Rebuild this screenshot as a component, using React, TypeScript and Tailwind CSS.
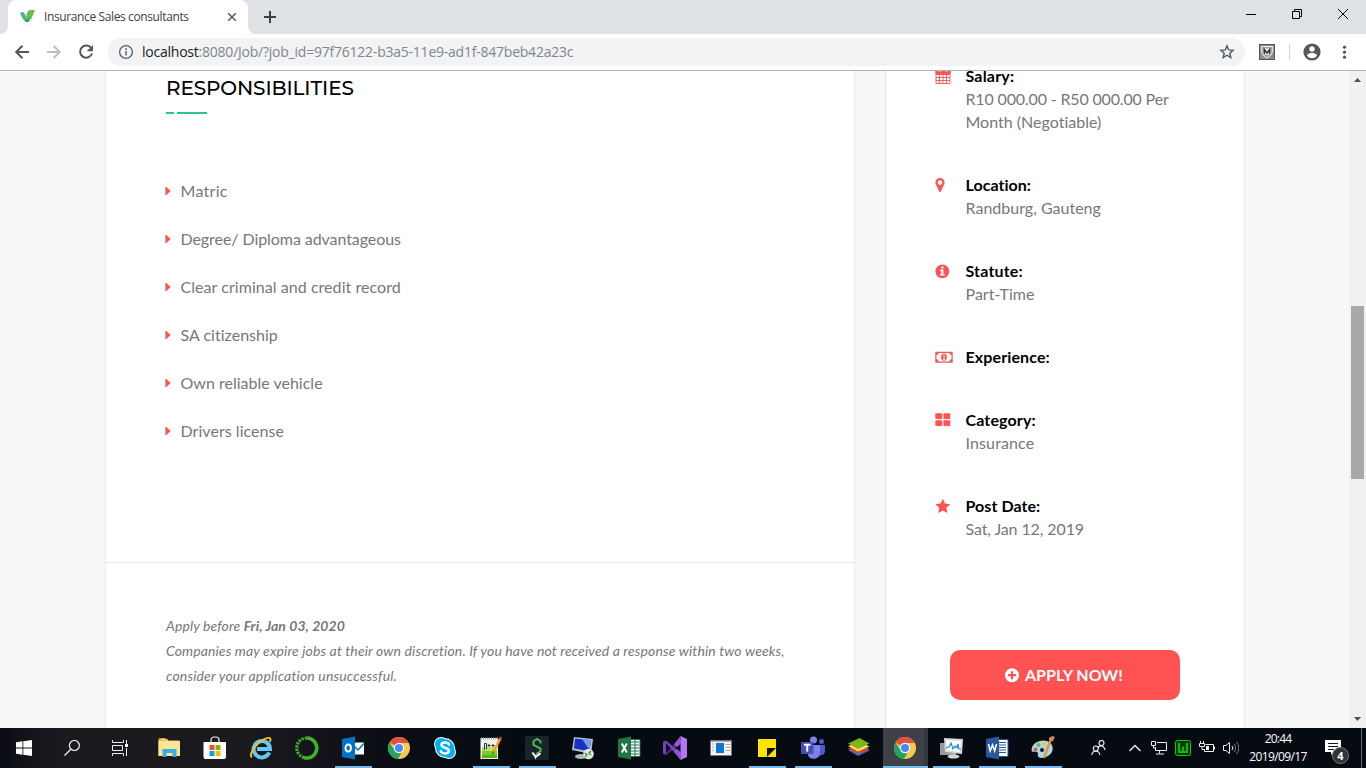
import React from "react";

const ui = "font-['Open_Sans','Noto_Sans',sans-serif]";

type IconProps = { children: React.ReactNode; box?: string; className?: string };

function Svg({ children, box = "0 0 24 24", className = "h-6 w-6" }: IconProps) {
  return (
    <svg viewBox={box} className={`block shrink-0 ${className}`} fill="none">
      {children}
    </svg>
  );
}

function TabStrip() {
  return (
    <div className="flex h-[34px] bg-[#dee1e6]">
      <div className="relative ml-2 flex h-[34px] w-[240px] items-center rounded-t-lg bg-white pl-3">
        <Svg className="absolute bottom-0 -left-2 h-2 w-2" box="0 0 8 8">
          <path d="M8 0v8H0a8 8 0 0 0 8-8Z" fill="#fff" />
        </Svg>
        <Svg className="absolute -right-2 bottom-0 h-2 w-2" box="0 0 8 8">
          <path d="M0 0v8h8a8 8 0 0 1-8-8Z" fill="#fff" />
        </Svg>
        <Svg className="h-4 w-4" box="0 0 16 16">
          <ellipse cx="8" cy="15" rx="3" ry=".6" fill="#e2eee8" />
          <path d="M0 3.500 3.600 3 5.700 6.400 6.400 13C2.900 11 1.200 8 0 3.500Z" fill="#4bb59a" />
          <path d="M5.700 13C6 8 6.500 2.500 9.500 1.100L14.800 1C13.500 5 11.500 11 8.200 13Z" fill="#69bb56" />
          <path d="m4.800 9 2 2.700 2-3.500-.6 4.800H5.700Z" fill="#159b70" />
        </Svg>
        <span className={`${ui} ml-2 w-[180px] text-[12px] leading-4 tracking-[-0.38px] whitespace-nowrap text-[#3c4043]`}>
          Insurance Sales consultants
        </span>
        <Svg className="h-4 w-4" box="0 0 16 16">
          <path d="m4.200 4.200 7.600 7.600m0-7.600-7.600 7.600" stroke="#54585d" strokeWidth="1.500" />
        </Svg>
      </div>
      <Svg className="mt-[9px] ml-[14px] h-4 w-4" box="0 0 16 16">
        <path d="M8 2v12M2 8h12" stroke="#3c4043" strokeWidth="2" />
      </Svg>
      <div className="ml-auto flex">
        <Svg className="mt-2 h-3 w-[46px]" box="0 0 46 12">
          <path d="M18 6.500h10" stroke="#000" />
        </Svg>
        <Svg className="mt-2 h-3 w-[46px]" box="0 0 46 12">
          <path d="M18.500 3.500h7v7h-7zM20.500 3V1.500h7v7H26" stroke="#000" />
        </Svg>
        <Svg className="mt-2 h-3 w-[46px]" box="0 0 46 12">
          <path d="m18 1 10 10M28 1 18 11" stroke="#000" />
        </Svg>
      </div>
    </div>
  );
}

function Toolbar() {
  return (
    <div className="flex h-[36px] items-center bg-white pl-[14px]">
      <Svg className="h-4 w-4" box="0 0 16 16">
        <path d="M15 8H2.500M8.500 1.800 2.200 8l6.300 6.200" stroke="#54585d" strokeWidth="1.900" />
      </Svg>
      <Svg className="ml-4 h-4 w-4" box="0 0 16 16">
        <path d="M1 8h12.500M7.500 1.800 13.800 8l-6.300 6.200" stroke="#bdbfc1" strokeWidth="1.900" />
      </Svg>
      <Svg className="ml-4 h-4 w-4" box="0 0 16 16">
        <path d="M13.200 4.100A6.100 6.100 0 1 0 14 9.500" stroke="#54585d" strokeWidth="2" />
        <path d="M15 1v6.300H8.700Z" fill="#54585d" />
      </Svg>
      <div className="ml-[14px] flex h-7 w-[1137px] items-center rounded-full bg-[#f1f3f4] pl-[10px]">
        <Svg className="h-4 w-4" box="0 0 16 16">
          <circle cx="8" cy="8" r="6.400" stroke="#5f6368" strokeWidth="1.400" />
          <path d="M8 7v4.500M8 4.300v1.600" stroke="#5f6368" strokeWidth="1.500" />
        </Svg>
        <span className={`${ui} ml-2 text-[14px] leading-5 tracking-[-0.23px] whitespace-nowrap text-[#80868b]`}>
          <span className="text-[#202124]">localhost</span>:8080/Job/?job_id=97f76122-b3a5-11e9-ad1f-847beb42a23c
        </span>
        <Svg className="mr-[10px] ml-auto h-4 w-4" box="0 0 16 16">
          <path d="m8 1.900 1.700 4 4.400.4-3.300 2.900 1 4.300L8 11.200l-3.800 2.300 1-4.300-3.300-2.900 4.400-.4Z" stroke="#54585d" strokeWidth="1.400" />
        </Svg>
      </div>
      <Svg className="ml-[14px] h-4 w-4" box="0 0 16 16">
        <rect x=".5" y=".5" width="15" height="15" fill="#8c8c8c" stroke="#555" />
        <path d="M2.500 2.500h11C14 9 12.500 12 8 14 3.500 12 2 9 2.500 2.500Z" fill="#a8a8a8" stroke="#ececec" />
        <path d="M4.500 4.500h7v6h-7Z" fill="#eee" />
        <path d="M5.300 10V5.500L8 9l2.700-3.500V10" stroke="#333" strokeWidth="1.500" />
      </Svg>
      <div className="ml-[14px] h-4 w-px bg-[#d0d3d7]" />
      <Svg className="ml-[13px] h-[18px] w-[18px]" box="0 0 18 18">
        <circle cx="9" cy="9" r="8.600" fill="#54585d" />
        <circle cx="9" cy="6" r="2.700" fill="#fff" />
        <path d="M3.800 12.300C5 10.500 7 10 9 10s4 .5 5.200 2.300C13 14.300 11.200 15.300 9 15.300s-4-1-5.200-3Z" fill="#fff" />
      </Svg>
      <Svg className="ml-[15px] h-4 w-4" box="0 0 16 16">
        <g fill="#54585d">
          <circle cx="8.500" cy="3.200" r="1.600" />
          <circle cx="8.500" cy="8.200" r="1.600" />
          <circle cx="8.500" cy="13.200" r="1.600" />
        </g>
      </Svg>
    </div>
  );
}

const requirements = [
  { text: "Matric", spacing: "tracking-[0.3px]" },
  { text: "Degree/ Diploma advantageous", spacing: "tracking-[-0.07px]" },
  { text: "Clear criminal and credit record", spacing: "tracking-[0.05px]" },
  { text: "SA citizenship", spacing: "tracking-[0.02px]" },
  { text: "Own reliable vehicle", spacing: "tracking-[0.01px]" },
  { text: "Drivers license", spacing: "tracking-[0.05px]" },
];

function JobDetails() {
  return (
    <main className="h-[657px] w-[750px] overflow-hidden border-x border-[#e8e8e8] bg-white">
      <section className="h-[492px] border-b border-[#e8e8e8] pl-[60px]">
        <h2 className="pt-[2px] font-['Montserrat','Inter',sans-serif] text-[20px] leading-[30px] font-medium tracking-[-0.12px] text-black">
          RESPONSIBILITIES
        </h2>
        <div className="mt-[9px] flex gap-[3px]">
          <div className="h-[2px] w-2 bg-[#2ec194]" />
          <div className="h-[2px] w-[30px] bg-[#2ec194]" />
        </div>
        <ul className="mt-[65px] flex flex-col gap-6">
          {requirements.map((item) => (
            <li key={item.text} className={`flex h-6 items-center text-[16px] leading-6 text-[#777] ${item.spacing}`}>
              <Svg className="-ml-px mr-[0.5px] h-[10px] w-[15px]" box="0 0 15 10">
                <path d="m.4.300 5.300 4.700-5.300 4.700Z" fill="#ff4f57" />
              </Svg>
              {item.text}
            </li>
          ))}
        </ul>
      </section>
      <section className="pt-[50px] pl-[60px] text-[14px] leading-[25px] whitespace-nowrap text-[#777] italic">
        <p className="tracking-[0.09px]">
          Apply before <b className="font-bold">Fri, Jan 03, 2020</b>
        </p>
        <p className="tracking-[0.12px]">
          Companies may expire jobs at their own discretion. If you have not received a response within two weeks,
        </p>
        <p className="tracking-[0.16px]">consider your application unsuccessful.</p>
      </section>
    </main>
  );
}

const red = "#ff5252";

const facts = [
  {
    label: "Salary:",
    spacing: "tracking-[0.2px]",
    lines: ["R10 000.00 - R50 000.00 Per", "Month (Negotiable)"],
    lineSpacing: "tracking-[-0.16px]",
    icon: (
      <>
        <path d="M1 3h14v12.500H1ZM1 6.500h14M1 9.500h14M1 12.500h14M4.500 6v9.500M8 6v9.500M11.500 6v9.500" stroke={red} strokeWidth=".9" />
        <path d="M.5 2.500h15V6H.5Z" fill={red} />
        <path d="M4.500 1v3M11.500 1v3" stroke="#fff" strokeWidth="2.500" />
        <path d="M4.500 1v3M11.500 1v3" stroke={red} strokeWidth="1.200" />
      </>
    ),
  },
  {
    label: "Location:",
    spacing: "tracking-[0.03px]",
    lines: ["Randburg, Gauteng"],
    lineSpacing: "tracking-[0.01px]",
    icon: <path fillRule="evenodd" d="M5 1a4.600 4.600 0 0 0-4.600 4.600c0 .8.200 1.400.5 2l3.300 6.900c.3.700 1.300.7 1.600 0l3.300-6.900c.3-.6.5-1.200.5-2A4.600 4.600 0 0 0 5 1Zm0 2.300a2.300 2.300 0 1 1 0 4.600 2.300 2.300 0 0 1 0-4.600Z" fill={red} />,
  },
  {
    label: "Statute:",
    spacing: "tracking-[0.18px]",
    lines: ["Part-Time"],
    lineSpacing: "tracking-[0.03px]",
    icon: (
      <>
        <circle cx="7.300" cy="8.300" r="6.900" fill={red} />
        <path d="M6.100 3.500h2.300v2H6.100ZM5.100 6.600h3.300V11h1.200v1.600H5.100V11h1.100V8.200H5.100Z" fill="#fff" />
      </>
    ),
  },
  {
    label: "Experience:",
    spacing: "tracking-[0.12px]",
    lines: [],
    lineSpacing: "",
    icon: (
      <>
        <path fillRule="evenodd" d="M.3 2.700h17.400v11H.3Zm3.400 1.200A2.300 2.300 0 0 1 1.500 6.100v4.200a2.300 2.300 0 0 1 2.200 2.200h10.600a2.300 2.300 0 0 1 2.200-2.200V6.100a2.300 2.300 0 0 1-2.200-2.200Z" fill={red} />
        <ellipse cx="9" cy="8.200" rx="2.900" ry="3.600" fill={red} />
        <path d="m7.900 6.700 1.300-.7v4m-1.400.2h2.600" stroke="#fff" strokeWidth=".9" />
      </>
    ),
  },
  {
    label: "Category:",
    spacing: "tracking-[0.14px]",
    lines: ["Insurance"],
    lineSpacing: "tracking-[0.13px]",
    icon: (
      <g fill={red}>
        <rect x=".3" y="1.300" width="6.900" height="5.700" rx="1" />
        <rect x="8.400" y="1.300" width="6.900" height="5.700" rx="1" />
        <rect x=".3" y="8.300" width="6.900" height="5.700" rx="1" />
        <rect x="8.400" y="8.300" width="6.900" height="5.700" rx="1" />
      </g>
    ),
  },
  {
    label: "Post Date:",
    spacing: "tracking-[0.06px]",
    lines: ["Sat, Jan 12, 2019"],
    lineSpacing: "tracking-[-0.1px]",
    icon: <path d="m7.800.8 2.200 4.700 5.200.7-3.800 3.600.9 5.100-4.500-2.500-4.500 2.500.9-5.100L.4 6.200l5.200-.7Z" fill={red} />,
  },
];

function Sidebar() {
  return (
    <aside className="ml-[30px] h-[657px] w-[360px] overflow-hidden border-x border-[#e8e8e8] bg-white pl-[49px]">
      <div className="-mt-[7px] flex flex-col gap-10">
        {facts.map((fact) => (
          <div key={fact.label} className="flex text-[16px] leading-[23px]">
            <Svg box="0 0 18 16" className="mt-1 h-4 w-[18px]">
              {fact.icon}
            </Svg>
            <div className="ml-[12.5px]">
              <div className={`font-bold text-black ${fact.spacing}`}>{fact.label}</div>
              {fact.lines.map((line) => (
                <div
                  key={line}
                  className={`whitespace-nowrap text-[#777] ${line.startsWith("Month") ? "tracking-[0.01px]" : fact.lineSpacing}`}
                >
                  {line}
                </div>
              ))}
            </div>
          </div>
        ))}
      </div>
      <button className="mt-[110px] ml-[15px] flex h-[50px] w-[230px] items-center rounded-[10px] bg-[#ff5252] pl-[54px] text-[16px] font-bold text-white">
        <Svg box="0 0 16 16" className="mr-[5px] h-4 w-4">
          <circle cx="8" cy="8.200" r="7" fill="#fff" />
          <path d="M8 4.200v8M4 8.200h8" stroke={red} strokeWidth="2.200" />
        </Svg>
        APPLY NOW!
      </button>
    </aside>
  );
}

function Scrollbar() {
  return (
    <div className="ml-auto flex h-[657px] w-[17px] flex-col items-center bg-[#f1f1f1]">
      <Svg className="h-[17px] w-[17px]" box="0 0 17 17">
        <path d="M5 11h7L8.500 7Z" fill="#505050" />
      </Svg>
      <div className="mt-[218px] h-[173px] w-[13px] bg-[#a8a8a8]" />
      <Svg className="mt-auto h-[17px] w-[17px]" box="0 0 17 17">
        <path d="M5 6h7l-3.500 4Z" fill="#505050" />
      </Svg>
    </div>
  );
}

const chrome = (
  <>
    <circle cx="12" cy="12" r="11" fill="#fbc94b" />
    <path d="M12 12 2.500 6.500A11 11 0 0 1 21.800 7H12Z" fill="#de5246" />
    <path d="M2.500 6.500A11 11 0 0 0 11 23l4.700-8.500L12 12 7.500 14Z" fill="#1da362" />
    <circle cx="12" cy="12" r="5.200" fill="#fff" />
    <circle cx="12" cy="12" r="4.100" fill="#4a8af4" />
  </>
);

const apps: { name: string; open?: boolean; active?: boolean; art: React.ReactNode }[] = [
  {
    name: "explorer",
    art: (
      <>
        <path d="M1.500 3h9l1 1.500H22V20H1.500Z" fill="#f0c65b" />
        <path d="M1.500 5H23v15H1.500Z" fill="#ffe496" />
        <path d="M2 3h7" stroke="#f7aa1d" strokeWidth="1.500" />
        <path d="M4.500 3.200h3" stroke="#fff" />
        <path d="M5.500 21v-8h14v8h-4v-4h-6v4Z" fill="#37aee3" />
      </>
    ),
  },
  {
    name: "store",
    art: (
      <>
        <path d="M8 6V4a3 3 0 0 1 3-3h2a3 3 0 0 1 3 3v2" stroke="#eee" strokeWidth="1.200" />
        <path d="M.5 6H23v15a2 2 0 0 1-2 2H2.500a2 2 0 0 1-2-2Z" fill="#fff" />
        <path d="M6.500 9h5v5h-5Z" fill="#f25022" />
        <path d="M12.500 9h5v5h-5Z" fill="#7fba00" />
        <path d="M6.500 15h5v5h-5Z" fill="#00a4ef" />
        <path d="M12.500 15h5v5h-5Z" fill="#ffb900" />
      </>
    ),
  },
  {
    name: "internet explorer",
    art: (
      <>
        <path d="M20.300 16.500A8.200 8.200 0 1 1 21 13H8" stroke="#62c9f5" strokeWidth="4" />
        <path d="M2.800 21.500C0 18 5 10.500 11 6c5-4 9.500-5 10.300-3.300.4.900.1 2-.4 3.200" stroke="#f5bf20" strokeWidth="1.900" />
      </>
    ),
  },
  {
    name: "anaconda",
    art: (
      <>
        <path d="M12 2a10 10 0 1 1-3 19.600" stroke="#43b02a" strokeWidth="3.600" />
        <path d="M9 21.600A10 10 0 0 1 12 2" stroke="#43b02a" strokeWidth="3.200" strokeDasharray="2.200 1.100" />
      </>
    ),
  },
  {
    name: "outlook",
    open: true,
    art: (
      <>
        <path d="M12 6.500h11v12H12Z" fill="#fff" />
        <path d="m12 9 5 5 6-6.500" stroke="#0072c6" strokeWidth="1.500" />
        <path d="M1 3 14 .5v23L1 21Z" fill="#0072c6" />
        <ellipse cx="7.200" cy="12" rx="2.700" ry="3.500" stroke="#fff" strokeWidth="1.900" />
      </>
    ),
  },
  { name: "chrome", art: chrome },
  {
    name: "skype",
    art: (
      <>
        <circle cx="8" cy="8" r="7" fill="#fff" />
        <circle cx="16" cy="16" r="7" fill="#fff" />
        <circle cx="12" cy="12" r="10" fill="#fff" />
        <circle cx="8" cy="8" r="6" fill="#00aff0" />
        <circle cx="16" cy="16" r="6" fill="#00aff0" />
        <circle cx="12" cy="12" r="9" fill="#00aff0" />
        <path d="M16 8.500C15 6 8.500 5.800 8.500 9c0 3.500 7.300 2 7.300 5.800 0 3.500-7 3.400-8 .2" stroke="#fff" strokeWidth="2.500" strokeLinecap="round" />
      </>
    ),
  },
  {
    name: "notepad",
    open: true,
    art: (
      <>
        <path d="M1.500 2H19v21H1.500Z" fill="#eff0ea" />
        <path d="M3 11h15v11H3Z" fill="#b5e860" />
        <path d="M3 15h15v7H3Z" fill="#7cc928" />
        <path d="M3 19h15v3H3Z" fill="#56b51b" />
        <path d="M2 2.500h17" stroke="#aaa" strokeWidth="2" strokeDasharray="1 1" />
        <path d="M5.500 14V7.500h2V13M8.500 9.500h3M10 8v3M12.500 9.500h3M14 8v3" stroke="#333" strokeWidth="1" />
        <path d="m21.500 2-7 14" stroke="#f3a22a" strokeWidth="2.600" />
        <path d="m22 1-1 2" stroke="#a63c32" strokeWidth="3" />
        <path d="m14.500 15.500-1 3" stroke="#444" />
      </>
    ),
  },
  {
    name: "recorder",
    open: true,
    art: (
      <>
        <rect width="24" height="24" rx="2" fill="#18232c" />
        <path d="M15.500 7.500V5.200L12 3 8.500 5.200v3.600l7 3.700v2.800L11 18" stroke="#55b548" strokeWidth="2" />
        <path d="M7.500 16.500c.5 1.500 2 2 3 4.500 1-2 4-1.500 4.500-4" stroke="#fff" strokeWidth="2" />
      </>
    ),
  },
  {
    name: "remote desktop",
    art: (
      <>
        <path d="m3 1 19 2-2 15L1 14Z" fill="#bcc3c8" />
        <path d="m4 2.500 16 1.700-1.500 11L3 12.500Z" fill="#1732c8" />
        <path d="m11 3 9 1-1.500 10Z" fill="#7999f2" />
        <ellipse cx="10" cy="20.500" rx="6" ry="2.500" fill="#b3b7b7" />
        <circle cx="17.500" cy="18" r="5.300" fill="#e5e6df" />
        <path d="m14 17 2 2-2 2m6-6-2 2 2 2" stroke="#388b45" strokeWidth="1.300" />
      </>
    ),
  },
  {
    name: "excel",
    art: (
      <>
        <path d="M12 3.500h11v17H12Z" fill="#fff" stroke="#217346" />
        <path d="M14 6h8M14 9h8M14 12h8M14 15h8M14 18h8M18 4v16" stroke="#217346" />
        <path d="M1 3 14 .5v23L1 21Z" fill="#217346" />
        <path d="m4.800 7.500 5 9m0-9-5 9" stroke="#fff" strokeWidth="1.900" />
      </>
    ),
  },
  {
    name: "visual studio",
    art: (
      <>
        <path d="M17.500 0v24L24 21V3Z" fill="#b179f1" />
        <path d="M0 6v12l3 1.500L18 7V0L3 17V7Z" fill="#52218a" />
        <path d="m0 6 3-1.500L18 17v7L3 7v11l-3-1Z" fill="#7a3fc0" />
        <path d="M17.500 0 11 8.500l3 2.500L18 7.500Zm0 24L11 15.500l3-2.500 4 3.500Z" fill="#9557d4" />
      </>
    ),
  },
  {
    name: "window",
    art: (
      <>
        <path d="M1.500 4.500h21v15h-21Z" fill="#f5f5f5" stroke="#777" />
        <path d="M7 7h8v10H7Z" fill="#0878d8" />
        <path d="M2 5.500h20M3 8h2M3 11h2M3 14h2M16.500 8.500h5M16.500 11.500h5M16.500 14.500h5" stroke="#aaa" />
      </>
    ),
  },
  {
    name: "notes",
    open: true,
    art: (
      <>
        <path d="M3 3h18v9l-9 9H3Z" fill="#ffe400" />
        <path d="M12 12h9v9h-9Z" fill="#111" />
        <path d="M21 12v9h-9Z" fill="#ffe400" />
      </>
    ),
  },
  {
    name: "teams",
    open: true,
    art: (
      <>
        <circle cx="12.500" cy="4" r="3.500" fill="#7b83eb" />
        <circle cx="20.500" cy="5.500" r="2.500" fill="#5059c9" />
        <path d="M17 9h7v7a5 5 0 0 1-7 3Z" fill="#5059c9" />
        <path d="M7 9h12v8c0 7-12 8-12 1Z" fill="#7b83eb" />
        <path d="M0 6h12.500v12H0Z" fill="#464eb8" />
        <path d="M3 8.700h6.500M6.250 8.500v7" stroke="#fff" strokeWidth="1.900" />
      </>
    ),
  },
  {
    name: "bluestacks",
    art: (
      <>
        <path d="m1 14 12-4 9.500 4.500L11 20Z" fill="#2878cb" />
        <path d="m1 12.500 12-4L22.500 13 11 18Z" fill="#e53c2f" />
        <path d="m1 10 12-4 9.500 4.500-11.500 5Z" fill="#ffe14b" />
        <path d="M1 7.500 12.500 2l10 5.500L11 13Z" fill="#79b51c" />
      </>
    ),
  },
  { name: "chrome window", open: true, active: true, art: chrome },
  {
    name: "monitor",
    open: true,
    art: (
      <>
        <path d="M1 7h11v12H1Z" fill="#999" />
        <path d="m5 2 19 1-1 15-17-2Z" fill="#d8dad8" />
        <path d="m7 4 15 1-1 11-13-1.500Z" fill="#f8fbff" />
        <path d="m7 12 3-1 2-4 2 6 2-3 2 2 1-4 1 5h2" stroke="#2686c0" strokeWidth="1.200" />
        <path d="M12 17h5v3h-5Z" fill="#aaa" />
        <ellipse cx="14.500" cy="20.500" rx="6" ry="2" fill="#d5d5d2" />
      </>
    ),
  },
  {
    name: "word",
    open: true,
    art: (
      <>
        <path d="M12 3.500h11v17H12Z" fill="#fff" stroke="#2b579a" />
        <path d="M14 6.500h7M14 9h7M14 11.500h7M14 14h7M14 16.500h7" stroke="#2b579a" />
        <path d="M1 3 14 .5v23L1 21Z" fill="#2b579a" />
        <path d="m3.500 8 1.700 7L7.500 9l2.200 6 1.800-7" stroke="#fff" strokeWidth="1.500" />
      </>
    ),
  },
  {
    name: "paint",
    open: true,
    art: (
      <>
        <path d="M.5 14C1 7 9 3 16 5c8 3 7 12 1 15-4 2-9 3-10 0-.8-2 1-3-1-4-3-1-5 1-5.500-2Z" fill="#add8e6" />
        <circle cx="4.500" cy="13.500" r="2" fill="#eb5142" />
        <circle cx="7.500" cy="9" r="2" fill="#67b955" />
        <circle cx="13" cy="7.500" r="2" fill="#f4c72f" />
        <circle cx="11" cy="14" r="2" fill="#111820" />
        <path d="m19.500 4-6.500 18" stroke="#e69635" strokeWidth="2.300" />
        <path d="m18 2 3-2 3 1-2 4-4 1Z" fill="#c48a59" />
      </>
    ),
  },
];

function AppButton({ art, open, active }: { art: React.ReactNode; open?: boolean; active?: boolean }) {
  return (
    <div className="h-10 w-[46px] shrink-0">
      <div className={`flex h-10 flex-col ${active ? "ml-px w-[45px] border-r-4 border-[#33373c] bg-[#3e4146]" : "w-[46px]"}`}>
        <Svg className={`mt-2 h-6 w-6 ${active ? "ml-[10px]" : "ml-[11px]"}`}>{art}</Svg>
        {open && <div className={`mt-[6px] h-[2px] bg-[#76b9ed] ${active ? "w-[45px]" : "ml-[5px] w-[37px]"}`} />}
      </div>
    </div>
  );
}

function Taskbar() {
  return (
    <footer className="flex h-10 bg-linear-[90deg,#0b0d14_0,#1c191f_60px,#1c191f_240px,#0a0d14_400px,#060b12_520px]">
      <div className="flex w-12 items-center justify-center">
        <Svg className="h-4 w-4" box="0 0 16 16">
          <path d="M0 2.200 6.500 1.300v6.200H0Zm7.300-1L16 0v7.500H7.300ZM0 8.400h6.500v6.300L0 13.800Zm7.300 0H16V16l-8.700-1.200Z" fill="#fff" />
        </Svg>
      </div>
      <div className="flex w-12 items-center justify-center">
        <Svg className="h-4 w-4" box="0 0 16 16">
          <circle cx="10.400" cy="5.500" r="5" stroke="#eee" strokeWidth="1.200" />
          <path d="M6.800 9.200.5 15.500" stroke="#eee" strokeWidth="1.300" />
        </Svg>
      </div>
      <div className="mr-[2px] flex w-12 items-center justify-center">
        <Svg className="h-4 w-4" box="0 0 16 16">
          <path d="M.5 0v2.500h11V0M.5 16v-2.500h11V16M.5 5.500h10v5H.5ZM14.500 0v4m0 4v8" stroke="#eee" />
          <path d="M13 4h3v3h-3Z" fill="#fff" />
        </Svg>
      </div>
      {apps.map((app) => (
        <AppButton key={app.name} {...app} />
      ))}
      <div className="flex items-center pl-[25px]">
        <Svg className="h-4 w-4" box="0 0 16 16">
          <g stroke="#eee" strokeWidth="1.200">
            <circle cx="10.500" cy="3" r="2.500" />
            <path d="M7 8c1-3 6-3 7 2" />
            <circle cx="4.800" cy="8.500" r="2.500" />
            <path d="M.8 15c.5-5 7.500-5 8 0" />
          </g>
        </Svg>
        <Svg className="ml-5 h-4 w-4" box="0 0 16 16">
          <path d="m2.500 11 5.500-5.500 5.500 5.500" stroke="#eee" strokeWidth="1.400" />
        </Svg>
        <Svg className="ml-2 h-4 w-4" box="0 0 16 16">
          <path d="M6 2.500h9.500v8H4.500V7M8.500 10.500v3M5 14h8M.5 1.500h4v4h-4ZM2.500 5.500V8h2" stroke="#eee" />
        </Svg>
        <Svg className="ml-2 h-4 w-4" box="0 0 16 16">
          <rect x=".5" y=".5" width="15" height="15" rx="2" fill="#053b05" stroke="#16c716" />
          <path d="M4 3v9h8V3M8 6.500V11" stroke="#12b512" strokeWidth="2.200" />
        </Svg>
        <Svg className="ml-2 h-4 w-4" box="0 0 16 16">
          <path d="M6.500 4.500h8v7h-9V9M15.500 6.500v3M1.500 1v3M4.500 1v3M.5 3.500h5v3h-5ZM3 6.500v3h3" stroke="#eee" />
          <path d="M7 6h3v4H7Z" fill="#eee" />
        </Svg>
        <Svg className="ml-2 h-4 w-4" box="0 0 16 16">
          <path d="M.5 5.500H3l3.500-3v11l-3.500-3H.5Z" stroke="#eee" />
          <path d="M9 6a3 3 0 0 1 0 4" stroke="#eee" />
          <path d="M11 4a6 6 0 0 1 0 8m2.500-10a9 9 0 0 1 0 12" stroke="#777" />
        </Svg>
      </div>
      <div className={`${ui} ml-[8px] w-[62px] text-center text-[12px] leading-[18px] whitespace-nowrap text-white`}>
        <div className="pt-[2px] tracking-[-0.8px]">20:44</div>
        <div className="tracking-[-0.6px]">2019/09/17</div>
      </div>
      <div className="relative ml-[16px] h-10 w-[27px]">
        <Svg className="mt-3 h-4 w-4" box="0 0 16 16">
          <path d="M0 0h16v12H9l-3 3v-3H0Z" fill="#fff" />
          <path d="M3 3.500h10M3 6.500h10M3 9.500h6" stroke="#111820" />
        </Svg>
        <span className={`${ui} absolute top-[19px] left-[7px] flex h-[17px] w-[17px] items-center justify-center rounded-full border border-[#777] bg-[#303236] text-[11px] leading-none font-bold text-white`}>
          4
        </span>
      </div>
      <div className="ml-auto h-10 w-[5px] border-l border-[#62666b]" />
    </footer>
  );
}

export default function App() {
  return (
    <div className="flex h-[768px] w-[1366px] flex-col overflow-hidden bg-white font-['Lato',sans-serif]">
      <TabStrip />
      <Toolbar />
      <div className="h-px bg-[#b3b3b5]" />
      <div className="flex h-[657px] bg-[#f8f8f8] pl-[105px]">
        <JobDetails />
        <Sidebar />
        <Scrollbar />
      </div>
      <Taskbar />
    </div>
  );
}
